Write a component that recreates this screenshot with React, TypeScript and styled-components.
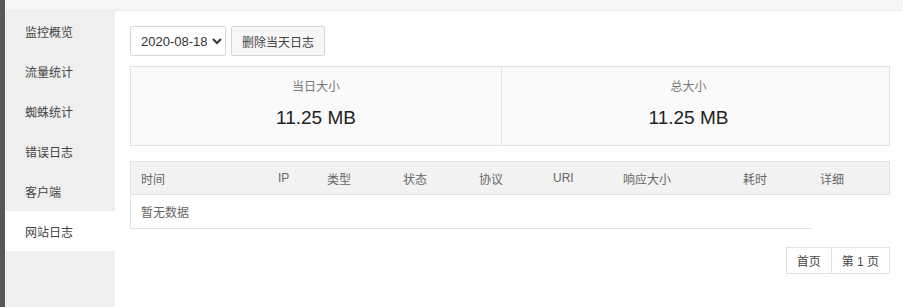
import React from "react";
import styled, { createGlobalStyle } from "styled-components";

const Global = createGlobalStyle`
  html, body { margin: 0; padding: 0; background: #fff; }
  body { font-family: "Liberation Sans", "Noto Sans CJK SC", sans-serif; color: #333; }
  * { box-sizing: border-box; }
`;

const Page = styled.div`
  width: 903px;
  height: 307px;
  display: flex;
  overflow: hidden;
  background: #fff;
`;

const EdgeStrip = styled.div`
  width: 5px;
  flex: none;
  background: #585858;
`;

const Body = styled.div`
  flex: 1;
  display: flex;
  flex-direction: column;
`;

const TopBar = styled.div`
  height: 11px;
  flex: none;
  background: #f6f6f6;
  border-bottom: 1px solid #ebebeb;
`;

const Split = styled.div`
  flex: 1;
  display: flex;
`;

const Sidebar = styled.nav`
  width: 110px;
  flex: none;
  background: #efefef;
  display: flex;
  flex-direction: column;
`;

const NavItem = styled.div<{ $active?: boolean }>`
  height: 40px;
  display: flex;
  align-items: center;
  padding-left: 20px;
  font-size: 12px;
  color: #444;
  background: ${(p) => (p.$active ? "#fff" : "transparent")};
`;

const Main = styled.main`
  flex: 1;
  padding: 15px 13px 0 15px;
  display: flex;
  flex-direction: column;
`;

const Toolbar = styled.div`
  display: flex;
  gap: 5px;
  height: 30px;
`;

const Select = styled.select`
  width: 96px;
  height: 30px;
  border: 1px solid #d6d6d6;
  border-radius: 2px;
  background: #fff;
  font-family: "Liberation Sans", sans-serif;
  font-size: 13px;
  color: #333;
  padding: 0 2px 0 6px;
`;

const Button = styled.button`
  height: 30px;
  width: 94px;
  border: 1px solid #d6d6d6;
  border-radius: 2px;
  background: #f7f7f7;
  font-family: "Liberation Sans", "Noto Sans CJK SC", sans-serif;
  font-size: 12px;
  color: #444;
  padding: 0;
`;

const Stats = styled.div`
  margin-top: 10px;
  height: 80px;
  display: flex;
  border: 1px solid #e2e2e2;
  background: #fafafa;
`;

const StatCell = styled.div<{ $width?: number; $padRight?: number }>`
  flex: ${(p) => (p.$width ? `0 0 ${p.$width}px` : "1")};
  display: flex;
  flex-direction: column;
  align-items: center;
  padding-top: 12px;
  padding-right: ${(p) => p.$padRight ?? 0}px;
  & + & { border-left: 1px solid #e2e2e2; }
`;

const StatLabel = styled.div`
  font-size: 12px;
  color: #777;
  line-height: 17px;
`;

const StatValue = styled.div`
  margin-top: 10px;
  font-size: 19px;
  color: #222;
  line-height: 24px;
`;

const cols = "138px 49px 76px 76px 74px 70px 120px 77px 80px";

const Table = styled.div`
  margin-top: 15px;
  display: grid;
  grid-template-columns: ${cols};
`;

const HeadCell = styled.div<{ $first?: boolean; $last?: boolean }>`
  height: 34px;
  display: flex;
  align-items: center;
  padding-left: 10px;
  font-size: 12px;
  color: #666;
  background: #f2f2f2;
  border-top: 1px solid #e2e2e2;
  border-bottom: 1px solid #e2e2e2;
  border-left: ${(p) => (p.$first ? "1px solid #e2e2e2" : "none")};
  border-right: ${(p) => (p.$last ? "1px solid #e2e2e2" : "none")};
`;

const EmptyCell = styled.div`
  grid-column: 1 / span 8;
  margin-right: -2px;
  height: 34px;
  display: flex;
  align-items: center;
  padding-left: 10px;
  font-size: 12px;
  color: #666;
  border-left: 1px solid #e2e2e2;
  border-bottom: 1px solid #e2e2e2;
`;

const Pager = styled.div`
  margin-top: 18px;
  align-self: flex-end;
  display: flex;
  border: 1px solid #e2e2e2;
  height: 27px;
`;

const PageBtn = styled.div`
  padding: 0 10px;
  display: flex;
  align-items: center;
  font-size: 12px;
  color: #444;
  & + & { border-left: 1px solid #e2e2e2; }
`;

const navItems = ["监控概览", "流量统计", "蜘蛛统计", "错误日志", "客户端", "网站日志"];
const heads = ["时间", "IP", "类型", "状态", "协议", "URI", "响应大小", "耗时", "详细"];

export default function App() {
  return (
    <Page>
      <Global />
      <EdgeStrip />
      <Body>
        <TopBar />
        <Split>
          <Sidebar>
            {navItems.map((n) => (
              <NavItem key={n} $active={n === "网站日志"}>
                {n}
              </NavItem>
            ))}
          </Sidebar>
          <Main>
            <Toolbar>
              <Select defaultValue="2020-08-18">
                <option>2020-08-18</option>
              </Select>
              <Button>删除当天日志</Button>
            </Toolbar>
            <Stats>
              <StatCell $width={370}>
                <StatLabel>当日大小</StatLabel>
                <StatValue>11.25 MB</StatValue>
              </StatCell>
              <StatCell $padRight={14}>
                <StatLabel>总大小</StatLabel>
                <StatValue>11.25 MB</StatValue>
              </StatCell>
            </Stats>
            <Table>
              {heads.map((h, i) => (
                <HeadCell key={h} $first={i === 0} $last={i === heads.length - 1}>
                  {h}
                </HeadCell>
              ))}
              <EmptyCell>暂无数据</EmptyCell>
            </Table>
            <Pager>
              <PageBtn>首页</PageBtn>
              <PageBtn>第 1 页</PageBtn>
            </Pager>
          </Main>
        </Split>
      </Body>
    </Page>
  );
}
